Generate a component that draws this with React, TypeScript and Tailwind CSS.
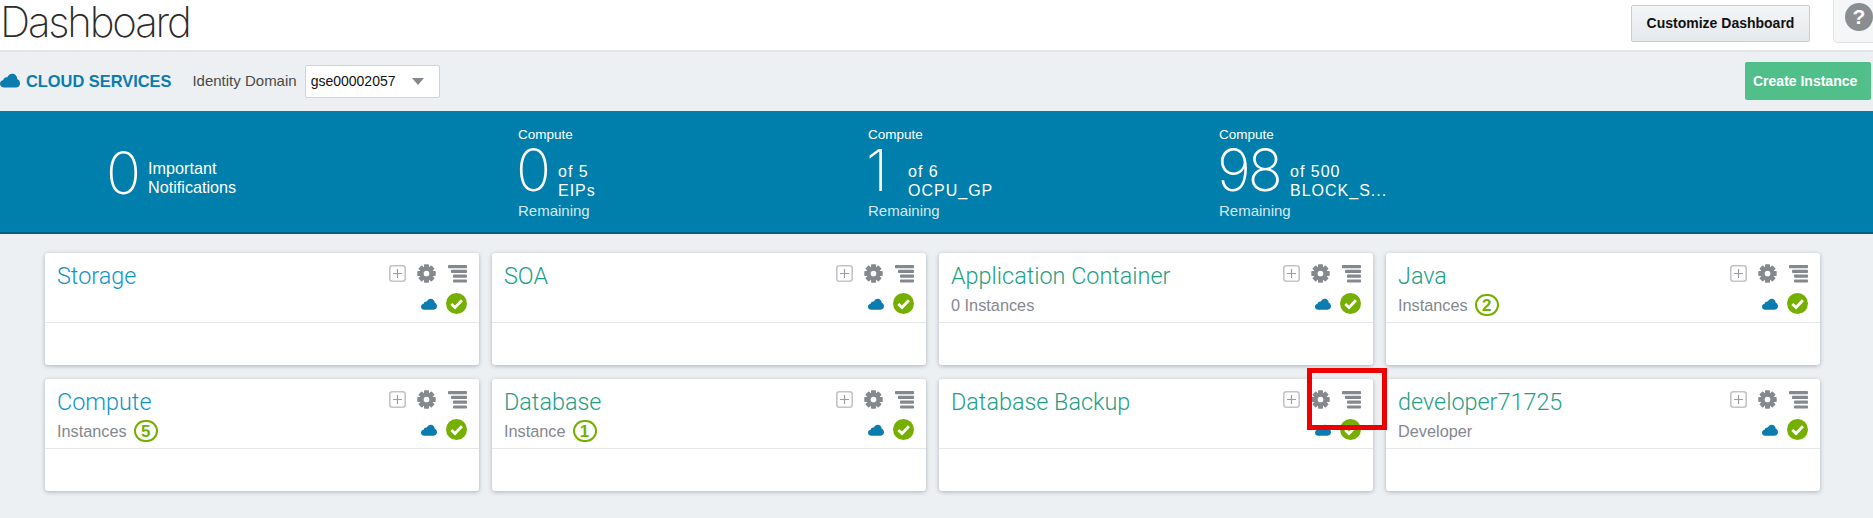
import React from "react";

const TEAL = "text-[#1f9e86]";
const BLUE = "text-[#0f94c8]";

function Cloud({ className }: { className: string }) {
  return (
    <svg viewBox="0 0 24 17" className={className} fill="currentColor" aria-hidden="true">
      <path d="M5 17C2 17 0 15 0 12.5 0 10 1.8 8.3 4 8c.5-2.5 2.6-3.8 4.6-3.2C10 2 12 .5 14.5.5c3.5 0 6 2.5 6.1 6.3C22.6 7.5 24 9.5 24 12c0 3-2.2 5-5 5z" />
    </svg>
  );
}

function PlusBox() {
  return (
    <svg viewBox="0 0 17 17" className="w-[17px] h-[17px]" fill="none" aria-hidden="true">
      <rect x="0.8" y="0.8" width="15.4" height="15.4" rx="2.5" stroke="#c2c5c8" strokeWidth="1.6" />
      <path d="M8.5 4v9M4 8.5h9" stroke="#9a9da1" strokeWidth="1.2" />
    </svg>
  );
}

function Gear() {
  const teeth = [0, 45, 90, 135, 180, 225, 270, 315];
  return (
    <svg viewBox="0 0 20 20" className="w-[19px] h-[19px]" aria-hidden="true">
      {teeth.map((a) => (
        <rect key={a} x="7.4" y="0.3" width="5.2" height="5" rx="0.8" fill="#85888d" transform={`rotate(${a} 10 10)`} />
      ))}
      <circle cx="10" cy="10" r="5" fill="none" stroke="#85888d" strokeWidth="4" />
    </svg>
  );
}

function Lines() {
  return (
    <svg viewBox="0 0 19 18" className="w-[19px] h-[18px] ml-[1px]" fill="#85888d" aria-hidden="true">
      <rect x="0" y="0" width="19" height="3.2" rx="0.8" />
      <rect x="3" y="4.8" width="16" height="3.2" rx="0.8" />
      <rect x="5" y="9.6" width="14" height="3.2" rx="0.8" />
      <rect x="5" y="14.4" width="14" height="3.2" rx="0.8" />
    </svg>
  );
}

function Check() {
  return (
    <svg viewBox="0 0 21 21" className="w-[21px] h-[21px]" aria-hidden="true">
      <circle cx="10.5" cy="10.5" r="10.5" fill="#75b000" />
      <path d="M5.3 11l3.7 3.5 6.9-7.3" fill="none" stroke="#fff" strokeWidth="2.8" />
    </svg>
  );
}

type CardData = {
  title: string;
  color: string;
  sub?: string;
  count?: number;
};

const cards: CardData[] = [
  { title: "Storage", color: BLUE },
  { title: "SOA", color: TEAL },
  { title: "Application Container", color: TEAL, sub: "0 Instances" },
  { title: "Java", color: TEAL, sub: "Instances", count: 2 },
  { title: "Compute", color: BLUE, sub: "Instances", count: 5 },
  { title: "Database", color: TEAL, sub: "Instance", count: 1 },
  { title: "Database Backup", color: TEAL },
  { title: "developer71725", color: TEAL, sub: "Developer" },
];

function Card({ c }: { c: CardData }) {
  return (
    <div className="h-[112px] bg-white rounded-[3px] shadow-[0_1px_4px_rgba(90,105,120,0.45)] flex flex-col">
      <div className="h-[70px] border-b border-[#e6e8ea] pl-3 pr-[12px] flex justify-between">
        <div className="min-w-0">
          <div className={`mt-[8px] text-[23.4px] leading-[30px] font-['Roboto',sans-serif] font-light ${c.color}`}>
            {c.title}
          </div>
          {c.sub && (
            <div className="mt-[3px] h-[22px] flex items-center gap-[7px] text-[16.3px] text-[#85888f]">
              <span>{c.sub}</span>
              {c.count !== undefined && (
                <span className="w-[24px] h-[22px] rounded-full border-2 border-[#75b000] text-[#75b000] font-bold text-[17px] leading-none flex items-center justify-center">
                  {c.count}
                </span>
              )}
            </div>
          )}
        </div>
        <div className="flex flex-col items-end pt-[11px] shrink-0">
          <div className="flex items-center gap-[11px] h-[19px]">
            <PlusBox />
            <Gear />
            <Lines />
          </div>
          <div className="flex items-center gap-[9px] mt-[10px]">
            <Cloud className="w-[16px] h-[12px] text-[#0a7cae]" />
            <Check />
          </div>
        </div>
      </div>
    </div>
  );
}

function Stat({ value, of, unit, width, numW }: { value: string; of: string; unit: string; width: string; numW: string }) {
  return (
    <div className={`${width} pt-[15px] text-white`}>
      <div className="text-[13.5px] leading-[18px]">Compute</div>
      <div className="flex items-center h-[56px]">
        <span className={`${numW} -mt-[5px] text-[58px] font-['Inter',sans-serif] font-extralight leading-[46px] tracking-[-3px] whitespace-nowrap`}>
          <span className="-ml-[2px]">{value}</span>
        </span>
        <div className="mt-[18px] text-[16px] leading-[19px] tracking-[1px]">
          <div>{of}</div>
          <div>{unit}</div>
        </div>
      </div>
      <div className="text-[15px] leading-[18px] mt-[2px] text-[#d5e8f1]">Remaining</div>
    </div>
  );
}

export default function App() {
  return (
    <div className="relative h-[518px] w-full overflow-hidden bg-[#ecf0f3] font-['Liberation_Sans',Arial,sans-serif]">
      <header className="h-[52px] bg-white border-b-2 border-[#e3e6e9] flex items-start justify-between">
        <h1 className="text-[42px] leading-[44px] font-['Inter',sans-serif] font-extralight tracking-[-2.2px] text-[#2c2c2c]">
          Dashboard
        </h1>
        <div className="flex items-start">
          <button className="mt-[5px] w-[179px] h-[37px] rounded-[2px] border border-[#c9ced4] bg-gradient-to-b from-[#f3f5f7] to-[#e6e9ec] text-[14px] font-bold text-[#111]">
            Customize Dashboard
          </button>
          <div className="ml-[23px] -mt-[4px] w-[40px] h-[47px] rounded-bl-[5px] border-l border-b border-[#dfe3e7] bg-[#f5f6f7] pl-[11px] pt-[7px]">
            <div className="w-[28px] h-[28px] rounded-full bg-[#8b8e91] text-white font-bold text-[21px] leading-[28px] text-center">
              ?
            </div>
          </div>
        </div>
      </header>

      <div className="h-[59px] flex items-center justify-between">
        <div className="flex items-center">
          <Cloud className="w-[20px] h-[15px] text-[#0a7cae] mb-[3px]" />
          <span className="ml-[6px] text-[16.4px] font-bold text-[#0a7cae]">CLOUD SERVICES</span>
          <span className="ml-[21px] text-[15px] text-[#4a4a4a]">Identity Domain</span>
          <div className="ml-[8px] w-[135px] h-[33px] bg-white border border-[#cfd4d9] rounded-[2px] flex items-center pl-[5px] text-[14px] text-[#111]">
            gse00002057
            <span className="ml-[16px] w-0 h-0 border-l-[6px] border-r-[6px] border-t-[7px] border-l-transparent border-r-transparent border-t-[#85888d]" />
          </div>
        </div>
        <button className="mr-[2px] -mt-[1px] w-[126px] h-[38px] rounded-[2px] bg-[#51bf8a] text-white text-[14px] font-bold text-left pl-[8px]">
          Create Instance
        </button>
      </div>

      <section className="h-[123px] bg-[#007fac] border-b-2 border-[#075f7f] flex">
        <div className="w-[518px] pl-[106px] flex items-center text-white pt-[2px]">
          <span className="text-[58px] font-['Inter',sans-serif] font-extralight leading-none">0</span>
          <div className="ml-[7px] mt-[11px] text-[16.2px] leading-[19px]">
            <div>Important</div>
            <div>Notifications</div>
          </div>
        </div>
        <Stat value="0" of="of 5" unit="EIPs" width="w-[350px]" numW="w-[40px]" />
        <Stat value="1" of="of 6" unit="OCPU_GP" width="w-[351px]" numW="w-[40px]" />
        <Stat value="98" of="of 500" unit="BLOCK_S..." width="w-[300px]" numW="w-[71px]" />
      </section>

      <main className="grid grid-cols-4 gap-x-[13px] gap-y-[14px] pl-[45px] pr-[53px] pt-[19px]">
        {cards.map((c) => (
          <Card key={c.title} c={c} />
        ))}
      </main>

      <div className="absolute left-[1307px] top-[368px] w-[80px] h-[62px] border-[5px] border-[#ee0000]" />
    </div>
  );
}
